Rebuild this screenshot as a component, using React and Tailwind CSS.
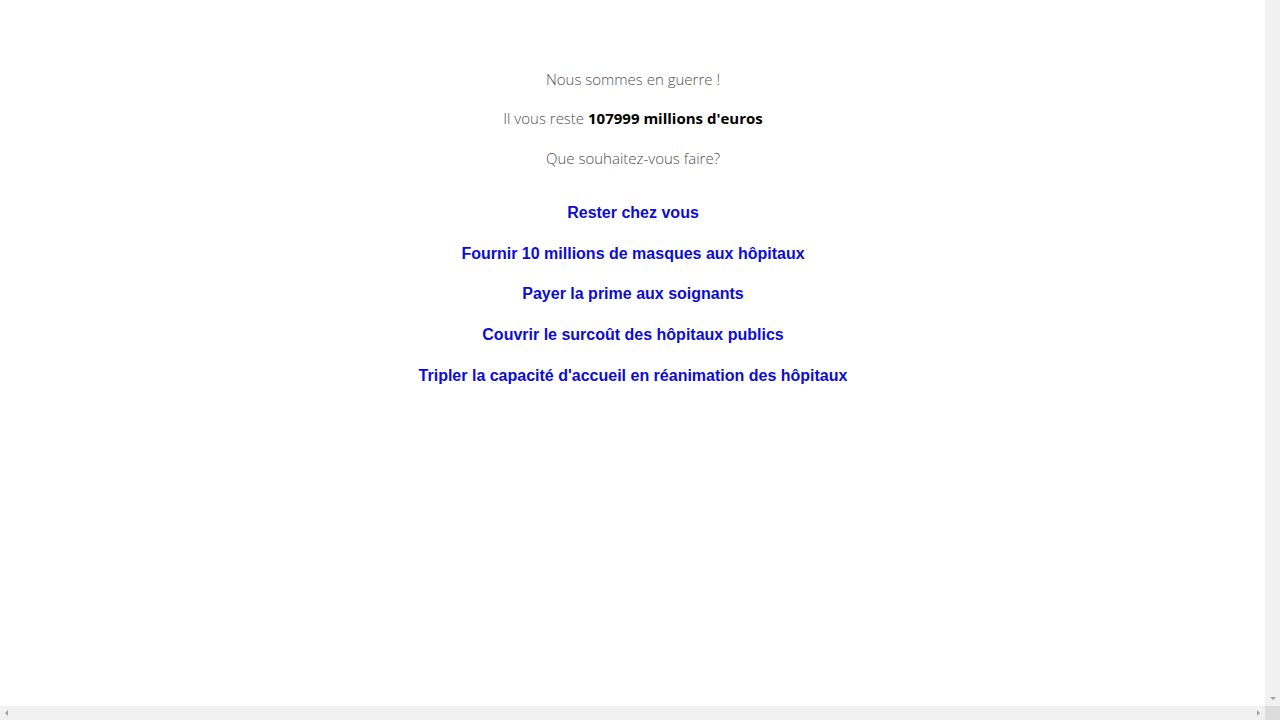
import React from "react";

const choix = [
  "Rester chez vous",
  "Fournir 10 millions de masques aux hôpitaux",
  "Payer la prime aux soignants",
  "Couvrir le surcoût des hôpitaux publics",
  "Tripler la capacité d'accueil en réanimation des hôpitaux",
];

function Fleche({ sens }) {
  const pts = {
    bas: "0,0 6,0 3,3",
    gauche: "3,0 3,6 0,3",
    droite: "0,0 0,6 3,3",
  };
  const dims = sens === "bas" ? { w: 6, h: 3 } : { w: 3, h: 6 };
  return (
    <svg width={dims.w} height={dims.h} viewBox={`0 0 ${dims.w} ${dims.h}`}>
      <polygon points={pts[sens]} fill="#a3a3a3" />
    </svg>
  );
}

export default function App() {
  return (
    <div className="flex h-screen w-full flex-col overflow-hidden bg-white">
      <div className="flex min-h-0 flex-1">
        <main className="flex-1 pt-[68px] pl-[1px] text-center">
          <p className="font-['Open_Sans',sans-serif] text-[15px] leading-[22px] font-light text-[#505050]">
            Nous sommes en guerre !
          </p>
          <p className="mt-[17px] font-['Open_Sans',sans-serif] text-[15px] leading-[22px] font-light text-[#505050]">
            Il vous reste{" "}
            <strong className="font-bold text-black">107999 millions d'euros</strong>
          </p>
          <p className="mt-[18px] font-['Open_Sans',sans-serif] text-[15px] leading-[22px] font-light text-[#505050]">
            Que souhaitez-vous faire?
          </p>
          <div className="mt-[34px] flex flex-col items-center gap-[21.7px]">
            {choix.map((c) => (
              <a
                key={c}
                href="#"
                className="font-['Liberation_Sans',Arial,sans-serif] text-[16px] leading-[19px] font-bold text-[#0c0cd4]"
              >
                {c}
              </a>
            ))}
          </div>
        </main>
        {/* barre de défilement verticale */}
        <div className="flex w-[15px] flex-col items-center justify-end bg-[#f1f1f1] pb-[6px]">
          <Fleche sens="bas" />
        </div>
      </div>
      <div className="flex h-[14px]">
        <div className="flex flex-1 items-center justify-between bg-[#f1f1f1] px-[5px]">
          <Fleche sens="gauche" />
          <Fleche sens="droite" />
        </div>
        <div className="w-[15px] bg-[#dcdcdc]" />
      </div>
    </div>
  );
}
